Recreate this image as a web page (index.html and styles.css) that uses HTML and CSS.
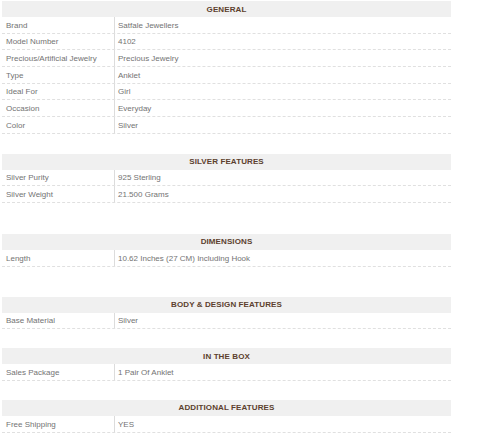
FILE: index.html
```html
<!DOCTYPE html>
<html>
<head>
<meta charset="utf-8">
<link rel="stylesheet" href="styles.css">
</head>
<body>
<div class="specs">
  <section class="group">
    <div class="head">GENERAL</div>
    <div class="row"><div class="k">Brand</div><div class="v">Satfale Jewellers</div></div>
    <div class="row"><div class="k">Model Number</div><div class="v">4102</div></div>
    <div class="row"><div class="k">Precious/Artificial Jewelry</div><div class="v">Precious Jewelry</div></div>
    <div class="row"><div class="k">Type</div><div class="v">Anklet</div></div>
    <div class="row"><div class="k">Ideal For</div><div class="v">Girl</div></div>
    <div class="row"><div class="k">Occasion</div><div class="v">Everyday</div></div>
    <div class="row"><div class="k">Color</div><div class="v">Silver</div></div>
  </section>
  <section class="group gap20">
    <div class="head">SILVER FEATURES</div>
    <div class="row"><div class="k">Silver Purity</div><div class="v">925 Sterling</div></div>
    <div class="row"><div class="k">Silver Weight</div><div class="v">21.500 Grams</div></div>
  </section>
  <section class="group gap31">
    <div class="head">DIMENSIONS</div>
    <div class="row"><div class="k">Length</div><div class="v">10.62 Inches (27 CM) Including Hook</div></div>
  </section>
  <section class="group gap30">
    <div class="head">BODY &amp; DESIGN FEATURES</div>
    <div class="row"><div class="k">Base Material</div><div class="v">Silver</div></div>
  </section>
  <section class="group gap19">
    <div class="head">IN THE BOX</div>
    <div class="row"><div class="k">Sales Package</div><div class="v">1 Pair Of Anklet</div></div>
  </section>
  <section class="group gap19">
    <div class="head">ADDITIONAL FEATURES</div>
    <div class="row"><div class="k">Free Shipping</div><div class="v">YES</div></div>
  </section>
</div>
</body>
</html>
```
FILE: styles.css
```css
html, body {
  margin: 0;
  padding: 0;
  background: #ffffff;
}
.specs {
  width: 449px;
  margin-left: 2px;
  padding-top: 1px;
  font-family: "Liberation Sans", Arial, sans-serif;
  font-size: 8px;
  color: #737373;
}
.group {
  display: flex;
  flex-direction: column;
}
.gap20 { margin-top: 20px; }
.gap31 { margin-top: 31px; }
.gap30 { margin-top: 30px; }
.gap19 { margin-top: 19px; }
.head {
  height: 16px;
  background: #f0f0f0;
  display: flex;
  align-items: center;
  justify-content: center;
  font-weight: bold;
  color: #5c3f2e;
  letter-spacing: 0.1px;
}
.row {
  height: 16.67px;
  box-sizing: border-box;
  border-bottom: 1px dashed #e0e0e0;
  display: flex;
}
.k {
  width: 113px;
  box-sizing: border-box;
  padding-left: 4px;
  padding-top: 1px;
  border-right: 1px solid #dcdcdc;
  display: flex;
  align-items: center;
}
.v {
  flex: 1;
  padding-left: 3px;
  padding-top: 1px;
  display: flex;
  align-items: center;
}
```
